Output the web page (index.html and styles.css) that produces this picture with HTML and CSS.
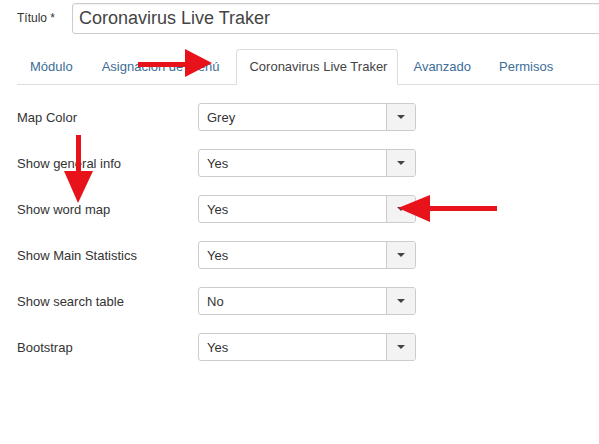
FILE: index.html
```html
<!DOCTYPE html>
<html lang="es">
<head>
    <meta charset="UTF-8">
    <meta name="viewport" content="width=device-width, initial-scale=1.0">
    <title>Coronavirus Live Traker</title>
    <link rel="stylesheet" href="styles.css">
</head>
<body>
    <div class="page">
        <div class="title-row">
            <label for="jform_title" class="title-label">Título *</label>
            <input type="text" id="jform_title" class="title-input" value="Coronavirus Live Traker">
        </div>

        <ul class="nav-tabs">
            <li><a href="#">Módulo</a></li>
            <li><a href="#">Asignación de menú</a></li>
            <li class="active"><a href="#">Coronavirus Live Traker</a></li>
            <li><a href="#">Avanzado</a></li>
            <li><a href="#">Permisos</a></li>
        </ul>

        <div class="tab-content">
            <div class="control-group">
                <div class="control-label">Map Color</div>
                <div class="chzn-select"><span>Grey</span><div class="chzn-btn"><b></b></div></div>
            </div>
            <div class="control-group">
                <div class="control-label">Show general info</div>
                <div class="chzn-select"><span>Yes</span><div class="chzn-btn"><b></b></div></div>
            </div>
            <div class="control-group">
                <div class="control-label">Show word map</div>
                <div class="chzn-select"><span>Yes</span><div class="chzn-btn"><b></b></div></div>
            </div>
            <div class="control-group">
                <div class="control-label">Show Main Statistics</div>
                <div class="chzn-select"><span>Yes</span><div class="chzn-btn"><b></b></div></div>
            </div>
            <div class="control-group">
                <div class="control-label">Show search table</div>
                <div class="chzn-select"><span>No</span><div class="chzn-btn"><b></b></div></div>
            </div>
            <div class="control-group">
                <div class="control-label">Bootstrap</div>
                <div class="chzn-select"><span>Yes</span><div class="chzn-btn"><b></b></div></div>
            </div>
        </div>

        <!-- flechas rojas de la captura -->
        <svg class="arrows" width="599" height="444" viewBox="0 0 599 444">
            <g fill="#e8121b">
                <rect x="138" y="62" width="50" height="5"/>
                <polygon points="185,49 212,63 185,77"/>
                <rect x="76" y="135" width="5" height="40"/>
                <polygon points="64,171 93,171 78,203"/>
                <rect x="425" y="206" width="72" height="5"/>
                <polygon points="430,195 398,208 430,222"/>
            </g>
        </svg>
    </div>
</body>
</html>
```

FILE: styles.css
```css
    body {
        font-family: "Liberation Sans", Arial, sans-serif;
        font-size: 13px;
        color: #333;
        background-color: #fff;
        margin: 0;
        padding: 0;
    }

    .page {
        position: relative;
        width: 599px;
        height: 444px;
        overflow: hidden;
        padding: 3px 0 0 17px;
        box-sizing: border-box;
    }

    .title-row {
        display: flex;
        align-items: center;
        gap: 7px;
    }

    .title-label {
        font-size: 12px;
        color: #333;
        width: 48px;
        flex-shrink: 0;
        margin-top: -1px;
    }

    .title-input {
        width: 560px;
        flex-shrink: 0;
        height: 31px;
        padding: 0 6px;
        border: 1px solid #ccc;
        border-radius: 3px;
        font-family: inherit;
        font-size: 18px;
        color: #444;
        box-sizing: border-box;
        box-shadow: inset 0 1px 1px rgba(0, 0, 0, 0.05);
    }

    .nav-tabs {
        list-style: none;
        display: flex;
        margin: 15px 0 0 0;
        padding: 0;
        border-bottom: 1px solid #ddd;
    }

    .nav-tabs li {
        margin-right: 2px;
        margin-bottom: -1px;
    }

    .nav-tabs li:nth-child(2) {
        margin-right: 4px;
    }

    .nav-tabs a {
        display: block;
        padding: 8px 12px;
        line-height: 18px;
        border: 1px solid transparent;
        border-radius: 4px 4px 0 0;
        color: #3d6d98;
        text-decoration: none;
    }

    .nav-tabs li:nth-child(2) a {
        padding-left: 13px;
    }

    .nav-tabs .active a {
        color: #444;
        background-color: #fff;
        border-color: #ddd #ddd transparent;
        padding-right: 10px;
    }

    .tab-content {
        padding-top: 18px;
        display: flex;
        flex-direction: column;
        gap: 18px;
    }

    .control-group {
        display: flex;
        align-items: center;
        height: 28px;
    }

    .control-label {
        width: 181px;
        color: #333;
    }

    .chzn-select {
        display: flex;
        align-items: center;
        width: 218px;
        height: 28px;
        border: 1px solid #ccc;
        border-radius: 3px;
        box-sizing: border-box;
        background-color: #fff;
        overflow: hidden;
    }

    .chzn-select span {
        flex: 1;
        padding-left: 8px;
        color: #333;
    }

    .chzn-btn {
        width: 28px;
        height: 100%;
        border-left: 1px solid #ccc;
        background-color: #f3f3f3;
        display: flex;
        align-items: center;
        justify-content: center;
    }

    .chzn-btn b {
        width: 0;
        height: 0;
        border-left: 4px solid transparent;
        border-right: 4px solid transparent;
        border-top: 4px solid #444;
    }

/* flechas */
.arrows {
  position: absolute;
  top: 0;
  left: 0;
  pointer-events: none;
}
```
